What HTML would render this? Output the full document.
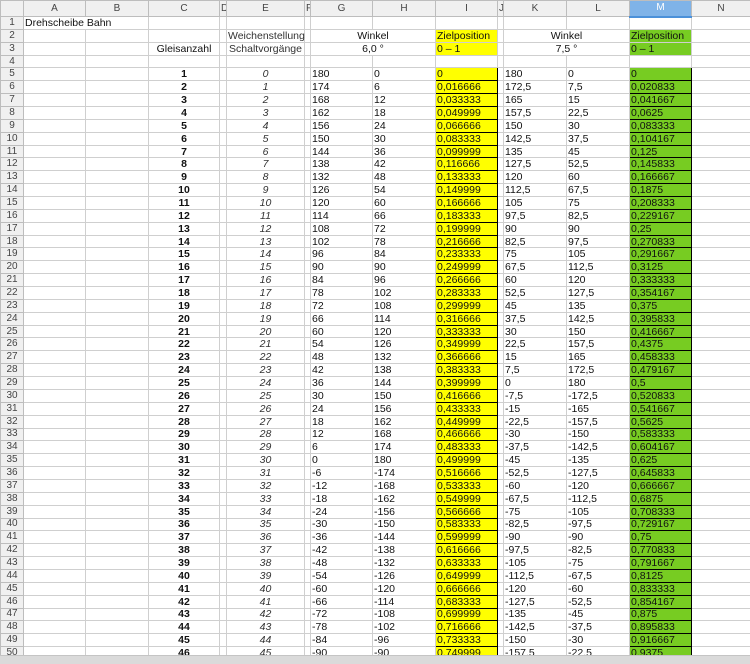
<!DOCTYPE html>
<html><head><meta charset="utf-8"><style>
body{margin:0;width:750px;height:663px;overflow:hidden;background:#fff;font-family:"Liberation Sans",sans-serif;font-size:10.5px;position:relative}
table{border-collapse:collapse;table-layout:fixed;width:750px;position:absolute;left:0;top:0}
td,th{border:1px solid #cfcfcf;padding:0 1px;white-space:nowrap;overflow:hidden;height:12.87px;line-height:10px;font-weight:normal;color:#111;box-sizing:border-box}
th{background:#f0f0f0;color:#444;text-align:center;font-size:10px;border-color:#bdbdbd}
tr.h th{height:16px}
tr.h th.m{background:#7fb3e8;color:#fff;border-bottom:2px solid #4a90d9}
tr td:nth-child(4){text-align:center;font-weight:bold}
tr td:nth-child(6){text-align:center;font-style:italic;color:#333}
tr.d td:nth-child(10){background:#ffff00;border:1px solid #000}
tr.d td:nth-child(14){background:#77cc22;border:1px solid #000}
.y{background:#ffff00}.g{background:#77cc22}.c{text-align:center}
.v{overflow:visible}
.sb{position:absolute;left:0;top:655px;width:750px;height:8px;background:#dadada;border-top:1px solid #c4c4c4}
</style></head><body>
<table>
<colgroup><col style="width:23px"><col style="width:62px"><col style="width:63px"><col style="width:71px"><col style="width:7px"><col style="width:78px"><col style="width:6px"><col style="width:62px"><col style="width:63px"><col style="width:62px"><col style="width:6px"><col style="width:63px"><col style="width:63px"><col style="width:62px"><col style="width:59px"></colgroup>
<tr class="h"><th></th><th>A</th><th>B</th><th>C</th><th>D</th><th>E</th><th>F</th><th>G</th><th>H</th><th>I</th><th>J</th><th>K</th><th>L</th><th class="m">M</th><th>N</th></tr>
<tr><th>1</th><td colspan="2" class="v">Drehscheibe Bahn</td><td></td><td></td><td></td><td></td><td></td><td></td><td></td><td></td><td></td><td></td><td></td><td></td></tr>
<tr><th>2</th><td></td><td></td><td></td><td></td><td class="v" style="text-align:center;font-style:normal">Weichenstellung</td><td></td><td colspan="2" class="c">Winkel</td><td class="y">Zielposition</td><td></td><td colspan="2" class="c">Winkel</td><td class="g">Zielposition</td><td></td></tr>
<tr><th>3</th><td></td><td></td><td style="font-weight:normal">Gleisanzahl</td><td></td><td class="v" style="text-align:center;font-style:normal">Schaltvorgänge</td><td></td><td colspan="2" class="c">6,0 °</td><td class="y">0 – 1</td><td></td><td colspan="2" class="c">7,5 °</td><td class="g">0 – 1</td><td></td></tr>
<tr><th>4</th><td></td><td></td><td></td><td></td><td></td><td></td><td></td><td></td><td></td><td></td><td></td><td></td><td></td><td></td></tr>
<tr class="d"><th>5</th><td></td><td></td><td>1</td><td></td><td>0</td><td></td><td>180</td><td>0</td><td>0</td><td></td><td>180</td><td>0</td><td>0</td><td></td></tr>
<tr class="d"><th>6</th><td></td><td></td><td>2</td><td></td><td>1</td><td></td><td>174</td><td>6</td><td>0,016666</td><td></td><td>172,5</td><td>7,5</td><td>0,020833</td><td></td></tr>
<tr class="d"><th>7</th><td></td><td></td><td>3</td><td></td><td>2</td><td></td><td>168</td><td>12</td><td>0,033333</td><td></td><td>165</td><td>15</td><td>0,041667</td><td></td></tr>
<tr class="d"><th>8</th><td></td><td></td><td>4</td><td></td><td>3</td><td></td><td>162</td><td>18</td><td>0,049999</td><td></td><td>157,5</td><td>22,5</td><td>0,0625</td><td></td></tr>
<tr class="d"><th>9</th><td></td><td></td><td>5</td><td></td><td>4</td><td></td><td>156</td><td>24</td><td>0,066666</td><td></td><td>150</td><td>30</td><td>0,083333</td><td></td></tr>
<tr class="d"><th>10</th><td></td><td></td><td>6</td><td></td><td>5</td><td></td><td>150</td><td>30</td><td>0,083333</td><td></td><td>142,5</td><td>37,5</td><td>0,104167</td><td></td></tr>
<tr class="d"><th>11</th><td></td><td></td><td>7</td><td></td><td>6</td><td></td><td>144</td><td>36</td><td>0,099999</td><td></td><td>135</td><td>45</td><td>0,125</td><td></td></tr>
<tr class="d"><th>12</th><td></td><td></td><td>8</td><td></td><td>7</td><td></td><td>138</td><td>42</td><td>0,116666</td><td></td><td>127,5</td><td>52,5</td><td>0,145833</td><td></td></tr>
<tr class="d"><th>13</th><td></td><td></td><td>9</td><td></td><td>8</td><td></td><td>132</td><td>48</td><td>0,133333</td><td></td><td>120</td><td>60</td><td>0,166667</td><td></td></tr>
<tr class="d"><th>14</th><td></td><td></td><td>10</td><td></td><td>9</td><td></td><td>126</td><td>54</td><td>0,149999</td><td></td><td>112,5</td><td>67,5</td><td>0,1875</td><td></td></tr>
<tr class="d"><th>15</th><td></td><td></td><td>11</td><td></td><td>10</td><td></td><td>120</td><td>60</td><td>0,166666</td><td></td><td>105</td><td>75</td><td>0,208333</td><td></td></tr>
<tr class="d"><th>16</th><td></td><td></td><td>12</td><td></td><td>11</td><td></td><td>114</td><td>66</td><td>0,183333</td><td></td><td>97,5</td><td>82,5</td><td>0,229167</td><td></td></tr>
<tr class="d"><th>17</th><td></td><td></td><td>13</td><td></td><td>12</td><td></td><td>108</td><td>72</td><td>0,199999</td><td></td><td>90</td><td>90</td><td>0,25</td><td></td></tr>
<tr class="d"><th>18</th><td></td><td></td><td>14</td><td></td><td>13</td><td></td><td>102</td><td>78</td><td>0,216666</td><td></td><td>82,5</td><td>97,5</td><td>0,270833</td><td></td></tr>
<tr class="d"><th>19</th><td></td><td></td><td>15</td><td></td><td>14</td><td></td><td>96</td><td>84</td><td>0,233333</td><td></td><td>75</td><td>105</td><td>0,291667</td><td></td></tr>
<tr class="d"><th>20</th><td></td><td></td><td>16</td><td></td><td>15</td><td></td><td>90</td><td>90</td><td>0,249999</td><td></td><td>67,5</td><td>112,5</td><td>0,3125</td><td></td></tr>
<tr class="d"><th>21</th><td></td><td></td><td>17</td><td></td><td>16</td><td></td><td>84</td><td>96</td><td>0,266666</td><td></td><td>60</td><td>120</td><td>0,333333</td><td></td></tr>
<tr class="d"><th>22</th><td></td><td></td><td>18</td><td></td><td>17</td><td></td><td>78</td><td>102</td><td>0,283333</td><td></td><td>52,5</td><td>127,5</td><td>0,354167</td><td></td></tr>
<tr class="d"><th>23</th><td></td><td></td><td>19</td><td></td><td>18</td><td></td><td>72</td><td>108</td><td>0,299999</td><td></td><td>45</td><td>135</td><td>0,375</td><td></td></tr>
<tr class="d"><th>24</th><td></td><td></td><td>20</td><td></td><td>19</td><td></td><td>66</td><td>114</td><td>0,316666</td><td></td><td>37,5</td><td>142,5</td><td>0,395833</td><td></td></tr>
<tr class="d"><th>25</th><td></td><td></td><td>21</td><td></td><td>20</td><td></td><td>60</td><td>120</td><td>0,333333</td><td></td><td>30</td><td>150</td><td>0,416667</td><td></td></tr>
<tr class="d"><th>26</th><td></td><td></td><td>22</td><td></td><td>21</td><td></td><td>54</td><td>126</td><td>0,349999</td><td></td><td>22,5</td><td>157,5</td><td>0,4375</td><td></td></tr>
<tr class="d"><th>27</th><td></td><td></td><td>23</td><td></td><td>22</td><td></td><td>48</td><td>132</td><td>0,366666</td><td></td><td>15</td><td>165</td><td>0,458333</td><td></td></tr>
<tr class="d"><th>28</th><td></td><td></td><td>24</td><td></td><td>23</td><td></td><td>42</td><td>138</td><td>0,383333</td><td></td><td>7,5</td><td>172,5</td><td>0,479167</td><td></td></tr>
<tr class="d"><th>29</th><td></td><td></td><td>25</td><td></td><td>24</td><td></td><td>36</td><td>144</td><td>0,399999</td><td></td><td>0</td><td>180</td><td>0,5</td><td></td></tr>
<tr class="d"><th>30</th><td></td><td></td><td>26</td><td></td><td>25</td><td></td><td>30</td><td>150</td><td>0,416666</td><td></td><td>-7,5</td><td>-172,5</td><td>0,520833</td><td></td></tr>
<tr class="d"><th>31</th><td></td><td></td><td>27</td><td></td><td>26</td><td></td><td>24</td><td>156</td><td>0,433333</td><td></td><td>-15</td><td>-165</td><td>0,541667</td><td></td></tr>
<tr class="d"><th>32</th><td></td><td></td><td>28</td><td></td><td>27</td><td></td><td>18</td><td>162</td><td>0,449999</td><td></td><td>-22,5</td><td>-157,5</td><td>0,5625</td><td></td></tr>
<tr class="d"><th>33</th><td></td><td></td><td>29</td><td></td><td>28</td><td></td><td>12</td><td>168</td><td>0,466666</td><td></td><td>-30</td><td>-150</td><td>0,583333</td><td></td></tr>
<tr class="d"><th>34</th><td></td><td></td><td>30</td><td></td><td>29</td><td></td><td>6</td><td>174</td><td>0,483333</td><td></td><td>-37,5</td><td>-142,5</td><td>0,604167</td><td></td></tr>
<tr class="d"><th>35</th><td></td><td></td><td>31</td><td></td><td>30</td><td></td><td>0</td><td>180</td><td>0,499999</td><td></td><td>-45</td><td>-135</td><td>0,625</td><td></td></tr>
<tr class="d"><th>36</th><td></td><td></td><td>32</td><td></td><td>31</td><td></td><td>-6</td><td>-174</td><td>0,516666</td><td></td><td>-52,5</td><td>-127,5</td><td>0,645833</td><td></td></tr>
<tr class="d"><th>37</th><td></td><td></td><td>33</td><td></td><td>32</td><td></td><td>-12</td><td>-168</td><td>0,533333</td><td></td><td>-60</td><td>-120</td><td>0,666667</td><td></td></tr>
<tr class="d"><th>38</th><td></td><td></td><td>34</td><td></td><td>33</td><td></td><td>-18</td><td>-162</td><td>0,549999</td><td></td><td>-67,5</td><td>-112,5</td><td>0,6875</td><td></td></tr>
<tr class="d"><th>39</th><td></td><td></td><td>35</td><td></td><td>34</td><td></td><td>-24</td><td>-156</td><td>0,566666</td><td></td><td>-75</td><td>-105</td><td>0,708333</td><td></td></tr>
<tr class="d"><th>40</th><td></td><td></td><td>36</td><td></td><td>35</td><td></td><td>-30</td><td>-150</td><td>0,583333</td><td></td><td>-82,5</td><td>-97,5</td><td>0,729167</td><td></td></tr>
<tr class="d"><th>41</th><td></td><td></td><td>37</td><td></td><td>36</td><td></td><td>-36</td><td>-144</td><td>0,599999</td><td></td><td>-90</td><td>-90</td><td>0,75</td><td></td></tr>
<tr class="d"><th>42</th><td></td><td></td><td>38</td><td></td><td>37</td><td></td><td>-42</td><td>-138</td><td>0,616666</td><td></td><td>-97,5</td><td>-82,5</td><td>0,770833</td><td></td></tr>
<tr class="d"><th>43</th><td></td><td></td><td>39</td><td></td><td>38</td><td></td><td>-48</td><td>-132</td><td>0,633333</td><td></td><td>-105</td><td>-75</td><td>0,791667</td><td></td></tr>
<tr class="d"><th>44</th><td></td><td></td><td>40</td><td></td><td>39</td><td></td><td>-54</td><td>-126</td><td>0,649999</td><td></td><td>-112,5</td><td>-67,5</td><td>0,8125</td><td></td></tr>
<tr class="d"><th>45</th><td></td><td></td><td>41</td><td></td><td>40</td><td></td><td>-60</td><td>-120</td><td>0,666666</td><td></td><td>-120</td><td>-60</td><td>0,833333</td><td></td></tr>
<tr class="d"><th>46</th><td></td><td></td><td>42</td><td></td><td>41</td><td></td><td>-66</td><td>-114</td><td>0,683333</td><td></td><td>-127,5</td><td>-52,5</td><td>0,854167</td><td></td></tr>
<tr class="d"><th>47</th><td></td><td></td><td>43</td><td></td><td>42</td><td></td><td>-72</td><td>-108</td><td>0,699999</td><td></td><td>-135</td><td>-45</td><td>0,875</td><td></td></tr>
<tr class="d"><th>48</th><td></td><td></td><td>44</td><td></td><td>43</td><td></td><td>-78</td><td>-102</td><td>0,716666</td><td></td><td>-142,5</td><td>-37,5</td><td>0,895833</td><td></td></tr>
<tr class="d"><th>49</th><td></td><td></td><td>45</td><td></td><td>44</td><td></td><td>-84</td><td>-96</td><td>0,733333</td><td></td><td>-150</td><td>-30</td><td>0,916667</td><td></td></tr>
<tr class="d"><th>50</th><td></td><td></td><td>46</td><td></td><td>45</td><td></td><td>-90</td><td>-90</td><td>0,749999</td><td></td><td>-157,5</td><td>-22,5</td><td>0,9375</td><td></td></tr>
</table>
<div class="sb"></div>
</body></html>
